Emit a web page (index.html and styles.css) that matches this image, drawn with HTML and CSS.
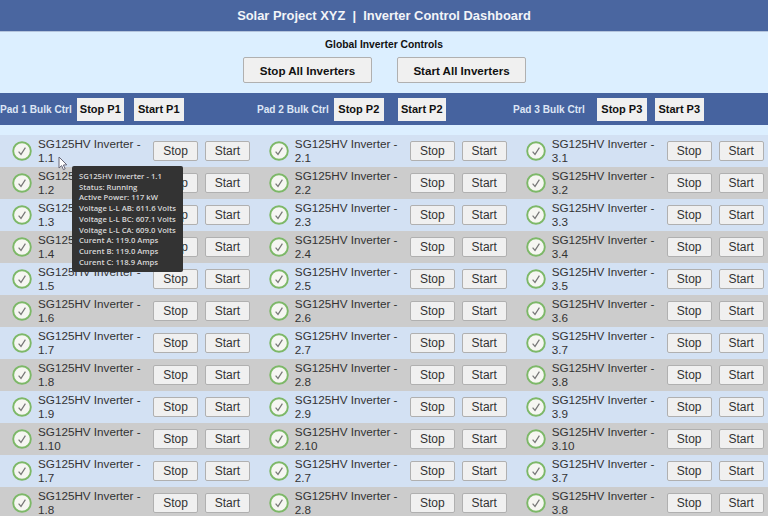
FILE: index.html
```html
<!DOCTYPE html>
<html lang="en">

<head>
    <meta charset="UTF-8" />
    <meta name="viewport" content="width=device-width, initial-scale=1.0" />
    <title>Inverter Control Dashboard</title>
    <link rel="stylesheet" href="styles.css">
</head>

<body>
    <main>
        <header class="title_bar">Solar Project XYZ &nbsp;|&nbsp; Inverter Control Dashboard</header>

        <section class="global_ctrl">
            <div class="global_title">Global Inverter Controls</div>
            <div class="global_btns">
                <button class="btn_all">Stop All Inverters</button>
                <button class="btn_all">Start All Inverters</button>
            </div>
        </section>

        <section class="pad_bar">
            <div class="pad pad1">
                <span class="pad_label">Pad 1 Bulk Ctrl</span>
                <button class="btn_pad stop">Stop P1</button>
                <button class="btn_pad start">Start P1</button>
            </div>
            <div class="pad pad2">
                <span class="pad_label">Pad 2 Bulk Ctrl</span>
                <button class="btn_pad stop">Stop P2</button>
                <button class="btn_pad start">Start P2</button>
            </div>
            <div class="pad pad3">
                <span class="pad_label">Pad 3 Bulk Ctrl</span>
                <button class="btn_pad stop">Stop P3</button>
                <button class="btn_pad start">Start P3</button>
            </div>
        </section>

        <section class="inverter_list" id="list"></section>

        <!-- hover tooltip for inverter 1.1 -->
        <div class="tooltip">
            <div>SG125HV Inverter - 1.1</div>
            <div>Status: Running</div>
            <div>Active Power: 117 kW</div>
            <div>Voltage L-L AB: 611.6 Volts</div>
            <div>Voltage L-L BC: 607.1 Volts</div>
            <div>Voltage L-L CA: 609.0 Volts</div>
            <div>Curent A: 119.0 Amps</div>
            <div>Curent B: 119.0 Amps</div>
            <div>Curent C: 118.9 Amps</div>
        </div>
        <svg class="cursor" width="10" height="15" viewBox="0 0 10 15">
            <path d="M1 1 L1 12 L3.6 9.6 L5.4 13.6 L7.2 12.8 L5.4 9 L8.8 8.8 Z" fill="#fff" stroke="#667" stroke-width="1" />
        </svg>
    </main>
    <script>
        /* rows: last two repeat 7 and 8, same as the live page */
        var rowNames = ["1", "2", "3", "4", "5", "6", "7", "8", "9", "10", "7", "8"];
        var $list = document.querySelector("#list");
        var check = '<svg class="status" width="20" height="20" viewBox="0 0 20 20">' +
            '<circle cx="10" cy="10" r="8.8" fill="#f6f6f2" stroke="#7db868" stroke-width="1.9" />' +
            '<path d="M6.6 10.6 L9 13.4 L13.4 6.6" fill="none" stroke="#777" stroke-width="1.2" />' +
            '</svg>';
        var html = "";
        for (var i = 0; i < rowNames.length; i++) {
            html += '<div class="row">';
            for (var p = 1; p <= 3; p++) {
                html += '<div class="cell">' + check +
                    '<span class="name">SG125HV Inverter - ' + p + '.' + rowNames[i] + '</span>' +
                    '<button class="btn">Stop</button><button class="btn">Start</button></div>';
            }
            html += '</div>';
        }
        $list.innerHTML = html;
    </script>
</body>

</html>
```
FILE: styles.css
```css
html,
body {
    height: 100%;
    padding: 0;
    margin: 0;
    overflow: hidden;
}

body {
    background: #dcefff;
    font-family: "Liberation Sans", Arial, sans-serif;
}

main {
    position: relative;
    height: 100%;
}

button {
    font-family: inherit;
    padding: 0;
    cursor: pointer;
}

.title_bar {
    background: #4a66a0;
    color: #f2f4f8;
    height: 31px;
    line-height: 31px;
    text-align: center;
    font-size: 12.9px;
    font-weight: bold;
    border-bottom: 1px solid #b4c4dc;
}

.global_ctrl {
    height: 61px;
    text-align: center;
    box-sizing: border-box;
    padding-top: 6px;
}

.global_title {
    font-size: 10.3px;
    font-weight: bold;
    line-height: 13px;
    color: #111;
}

.global_btns {
    display: flex;
    justify-content: center;
    gap: 25px;
    margin-top: 6px;
    padding-left: 1px;
}

.btn_all {
    width: 129px;
    height: 26px;
    background: #f0f0f0;
    border: 1px solid #b0b0b0;
    border-radius: 2px;
    font-size: 11.6px;
    font-weight: bold;
    color: #111;
}

.pad_bar {
    background: #46639f;
    height: 32px;
    display: flex;
    align-items: center;
}

.pad {
    display: flex;
    align-items: center;
}

.pad1 {
    width: 257px;
}

.pad2 {
    width: 256px;
}

.pad_label {
    color: #dde6f5;
    font-size: 10.1px;
    font-weight: bold;
    white-space: nowrap;
}

.btn_pad {
    height: 23px;
    background: #f0f0f0;
    border: 0;
    font-size: 11px;
    font-weight: bold;
    color: #111;
}

.pad1 .stop {
    width: 47px;
    margin-left: 5px;
}

.pad1 .start {
    width: 50px;
    margin-left: 10px;
}

.pad2 .stop {
    width: 50px;
    margin-left: 5px;
}

.pad2 .start {
    width: 48px;
    margin-left: 14px;
}

.pad3 .stop {
    width: 50px;
    margin-left: 12px;
}

.pad3 .start {
    width: 49px;
    margin-left: 8px;
}

.inverter_list {
    margin-top: 10px;
}

.row {
    display: flex;
    height: 32px;
    background: #d3e1f3;
}

.row:nth-child(even) {
    background: #cccccc;
}

.cell {
    width: 256.85px;
    display: flex;
    align-items: center;
    padding-left: 12px;
    box-sizing: border-box;
}

.status {
    flex: none;
}

.name {
    width: 115.3px;
    margin-left: 6px;
    font-size: 11.7px;
    line-height: 14px;
    color: #333;
}

.btn {
    width: 45px;
    height: 20px;
    background: #f0f0f0;
    border: 1px solid #b0b0b0;
    border-radius: 2px;
    font-size: 12px;
    color: #333;
    margin-right: 7px;
}

.tooltip {
    position: absolute;
    left: 72px;
    top: 166px;
    width: 111px;
    height: 106px;
    box-sizing: border-box;
    padding: 5px 0 0 7px;
    background: #333333;
    border-radius: 2px;
    color: #d8d8d8;
    font-family: "Open Sans", sans-serif;
    font-size: 7.7px;
    font-weight: 600;
    line-height: 10.7px;
    white-space: nowrap;
}

.cursor {
    position: absolute;
    left: 58px;
    top: 156px;
}
```
